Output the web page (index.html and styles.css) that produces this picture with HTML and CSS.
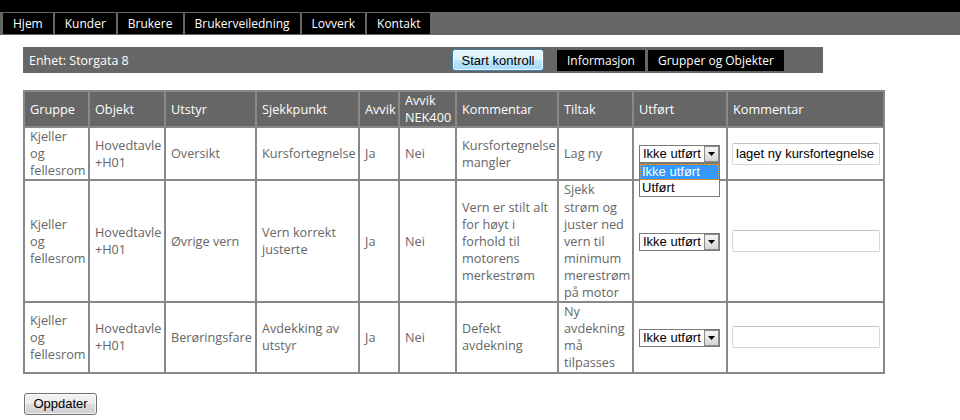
FILE: index.html
```html
<!DOCTYPE html>
<html lang="no">
<head>
<meta charset="utf-8">
<title>Kontroll</title>
<link rel="stylesheet" href="styles.css">
</head>
<body>
<div class="topbar"></div>
<nav class="nav">
  <a class="nav-item">Hjem</a>
  <a class="nav-item">Kunder</a>
  <a class="nav-item">Brukere</a>
  <a class="nav-item">Brukerveiledning</a>
  <a class="nav-item">Lovverk</a>
  <a class="nav-item">Kontakt</a>
</nav>
<main class="content">
  <div class="toolbar">
    <span class="unit">Enhet: Storgata 8</span>
    <button class="btn btn-start">Start kontroll</button>
    <a class="tab">Informasjon</a>
    <a class="tab">Grupper og Objekter</a>
  </div>
  <table class="grid">
    <thead>
      <tr>
        <th class="c-gruppe">Gruppe</th>
        <th class="c-objekt">Objekt</th>
        <th class="c-utstyr">Utstyr</th>
        <th class="c-sjekk">Sjekkpunkt</th>
        <th class="c-avvik">Avvik</th>
        <th class="c-nek">Avvik NEK400</th>
        <th class="c-komm">Kommentar</th>
        <th class="c-tiltak">Tiltak</th>
        <th class="c-utfort">Utført</th>
        <th class="c-komm2">Kommentar</th>
      </tr>
    </thead>
    <tbody>
      <tr>
        <td>Kjeller og fellesrom</td>
        <td>Hovedtavle +H01</td>
        <td>Oversikt</td>
        <td>Kursfortegnelse</td>
        <td>Ja</td>
        <td>Nei</td>
        <td>Kursfortegnelse mangler</td>
        <td>Lag ny</td>
        <td>
          <span class="selwrap is-open">
            <select class="sel"><option>Ikke utført</option><option>Utført</option></select>
            <span class="sel-arrow"><svg width="7" height="4" viewBox="0 0 7 4"><path d="M0 0h7L3.5 4z" fill="#000"/></svg></span>
            <ul class="sel-list">
              <li class="sel-opt is-active">Ikke utført</li>
              <li class="sel-opt">Utført</li>
            </ul>
          </span>
        </td>
        <td><input class="comment-input" type="text" value="laget ny kursfortegnelse"></td>
      </tr>
      <tr>
        <td>Kjeller og fellesrom</td>
        <td>Hovedtavle +H01</td>
        <td>Øvrige vern</td>
        <td>Vern korrekt justerte</td>
        <td>Ja</td>
        <td>Nei</td>
        <td>Vern er stilt alt for høyt i forhold til motorens merkestrøm</td>
        <td>Sjekk strøm og juster ned vern til minimum merestrøm på motor</td>
        <td>
          <span class="selwrap">
            <select class="sel"><option>Ikke utført</option><option>Utført</option></select>
            <span class="sel-arrow"><svg width="7" height="4" viewBox="0 0 7 4"><path d="M0 0h7L3.5 4z" fill="#000"/></svg></span>
          </span>
        </td>
        <td><input class="comment-input" type="text" value=""></td>
      </tr>
      <tr>
        <td>Kjeller og fellesrom</td>
        <td>Hovedtavle +H01</td>
        <td>Berøringsfare</td>
        <td>Avdekking av utstyr</td>
        <td>Ja</td>
        <td>Nei</td>
        <td>Defekt avdekning</td>
        <td>Ny avdekning må tilpasses</td>
        <td>
          <span class="selwrap">
            <select class="sel"><option>Ikke utført</option><option>Utført</option></select>
            <span class="sel-arrow"><svg width="7" height="4" viewBox="0 0 7 4"><path d="M0 0h7L3.5 4z" fill="#000"/></svg></span>
          </span>
        </td>
        <td><input class="comment-input" type="text" value=""></td>
      </tr>
    </tbody>
  </table>
  <button class="btn btn-update">Oppdater</button>
</main>
</body>
</html>
```
FILE: styles.css
```css
html, body {
  margin: 0;
  padding: 0;
  background: #fff;
}
body {
  font-family: "Open Sans", "Noto Sans", sans-serif;
  font-size: 12px;
  color: #666;
}
.topbar {
  height: 12px;
  background: #000;
}
.nav {
  display: flex;
  gap: 2px;
  height: 23px;
  box-sizing: border-box;
  padding: 1px 0 1px 3px;
  background: #666;
}
.nav-item {
  display: flex;
  align-items: center;
  padding: 0 10px;
  background: #000;
  color: #fff;
  text-decoration: none;
  font-size: 12px;
}
.content {
  padding: 12px 0 0 23px;
}
.toolbar {
  display: flex;
  align-items: center;
  width: 800px;
  height: 26px;
  background: #666;
  color: #fff;
}
.unit {
  flex: 0 0 429px;
  box-sizing: border-box;
  padding-left: 6px;
  font-size: 12.5px;
}
.btn {
  font-family: "Liberation Sans", Arial, sans-serif;
  font-size: 13px;
  color: #000;
  height: 22px;
  padding: 0;
  border: 1px solid #707070;
  border-radius: 3px;
  background: linear-gradient(#f2f2f2 0%, #ebebeb 50%, #dddddd 51%, #cfcfcf 100%);
  box-shadow: inset 0 0 0 1px rgba(255,255,255,0.7);
}
.btn-start {
  width: 92px;
  margin-right: 13px;
  border-color: #3c7fb1;
  background: linear-gradient(#eaf6fd 0%, #d9f0fc 50%, #bee6fd 51%, #a7d9f5 100%);
}
.tab {
  display: flex;
  align-items: center;
  height: 21px;
  padding: 0 10px;
  margin-right: 3px;
  background: #000;
  color: #fff;
  font-size: 12px;
}
.grid {
  margin-top: 17px;
  width: 862px;
  table-layout: fixed;
  border-collapse: separate;
  border-spacing: 0;
  border: 1px solid #888;
  font-size: 12.7px;
}
.grid th,
.grid td {
  border: 1px solid #888;
  padding: 0 5px;
  line-height: 17.1px;
  vertical-align: middle;
  text-align: left;
  font-weight: normal;
}
.grid th {
  background: #666;
  color: #fff;
  box-sizing: border-box;
}
.c-gruppe { width: 65px; }
.c-objekt { width: 76px; }
.c-utstyr { width: 91px; }
.c-sjekk { width: 103px; }
.c-avvik { width: 40px; }
.c-nek { width: 57px; }
.c-komm { width: 102px; }
.c-tiltak { width: 75px; }
.c-utfort { width: 94px; }
.c-komm2 { width: 157px; }

.selwrap {
  position: relative;
  display: inline-block;
  width: 81px;
  height: 18px;
  vertical-align: middle;
}
.sel {
  appearance: none;
  -webkit-appearance: none;
  width: 81px;
  height: 18px;
  box-sizing: border-box;
  margin: 0;
  padding: 0 0 0 3px;
  border: 1px solid #7a7a7a;
  border-radius: 0;
  background: #fff;
  font-family: "Liberation Sans", Arial, sans-serif;
  font-size: 13px;
  color: #000;
  line-height: 16px;
}
.sel-arrow {
  position: absolute;
  top: 1px;
  right: 1px;
  width: 15px;
  height: 16px;
  box-sizing: border-box;
  border: 1px solid #8a8a8a;
  background: linear-gradient(#f6f6f6, #d4d4d4);
  display: flex;
  align-items: center;
  justify-content: center;
}
.sel-list {
  position: absolute;
  top: 18px;
  left: 0;
  width: 81px;
  box-sizing: border-box;
  margin: 0;
  padding: 0;
  list-style: none;
  border: 1px solid #7a7a7a;
  background: #fff;
  z-index: 2;
  font-family: "Liberation Sans", Arial, sans-serif;
  font-size: 13px;
  color: #000;
}
.sel-opt {
  height: 16px;
  line-height: 16px;
  padding-left: 2px;
}
.sel-opt.is-active {
  background: #3399ff;
  color: #fff;
  outline: 1px dotted #e8a33a;
  outline-offset: -1px;
}
.comment-input {
  width: 148px;
  height: 22px;
  box-sizing: border-box;
  margin: 0 0 0 -1px;
  padding: 0 3px;
  border: 1px solid #d6d6d6;
  border-top-color: #c4c4c4;
  border-radius: 2px;
  font-family: "Liberation Sans", Arial, sans-serif;
  font-size: 13px;
  color: #000;
  background: #fff;
  vertical-align: middle;
}
.btn-update {
  display: block;
  width: 73px;
  margin: 19px 0 0 1px;
}
```
